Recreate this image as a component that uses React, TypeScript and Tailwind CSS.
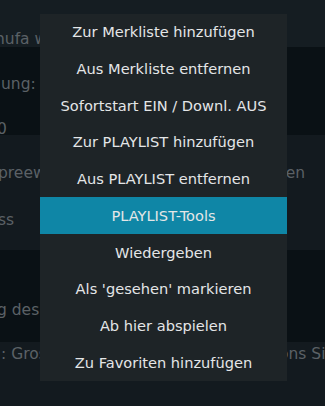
const items = [
  "Zur Merkliste hinzufügen",
  "Aus Merkliste entfernen",
  "Sofortstart EIN / Downl. AUS",
  "Zur PLAYLIST hinzufügen",
  "Aus PLAYLIST entfernen",
  "PLAYLIST-Tools",
  "Wiedergeben",
  "Als 'gesehen' markieren",
  "Ab hier abspielen",
  "Zu Favoriten hinzufügen",
];

const selected = 5;

function Line({ left, right, className = "" }: { left: string; right?: string; className?: string }) {
  return (
    <div className={`flex h-[22px] items-center justify-between whitespace-nowrap ${className}`}>
      <span>{left}</span>
      {right && <span>{right}</span>}
    </div>
  );
}

export default function App() {
  return (
    <div
      className="relative w-[325px] h-[406px] overflow-hidden bg-[#131a1f] text-[15.5px] text-[#5b6166]"
      style={{ fontFamily: '"DejaVu Sans", sans-serif' }}
    >
      <div className="flex flex-col">
        <div className="h-[47px] bg-[#151d22] pt-[29px]">
          <Line left="hufa wird gesucht" className="-ml-[5px]" />
        </div>
        <div className="h-[88px] overflow-hidden bg-[#0a1115] pt-[27px]">
          <Line left="ung: Infos zur Sendung" className="ml-[1px]" />
          <Line left="0" className="mt-[23px] -ml-[3px]" />
        </div>
        <div className="h-[115px] bg-[#131a1f] pt-[28px]">
          <Line left="preewald Krimi" right="en" className="-ml-[2px] pr-[20px]" />
          <Line left="ss" className="mt-[25px] -ml-[2px]" />
        </div>
        <div className="h-[92px] bg-[#0a1115] pt-[50px]">
          <Line left="g des Films" className="-ml-[3px]" />
        </div>
        <div className="h-[64px] bg-[#131a1f] pt-[2px] overflow-hidden">
          <Line left=": Grosse Geschichten" right="ons Sie" className="ml-[1px] -mr-[10px]" />
        </div>
      </div>

      <div className="absolute left-[40px] top-[14px] w-[247px] bg-[#1e2427] flex flex-col">
        {items.map((item, i) => (
          <div
            key={item}
            className={`h-[36.7px] flex items-center justify-center text-[14.6px] text-[#e4e6e7] ${
              i === selected ? "bg-[#0f86a6]" : ""
            }`}
          >
            {item}
          </div>
        ))}
      </div>
    </div>
  );
}
